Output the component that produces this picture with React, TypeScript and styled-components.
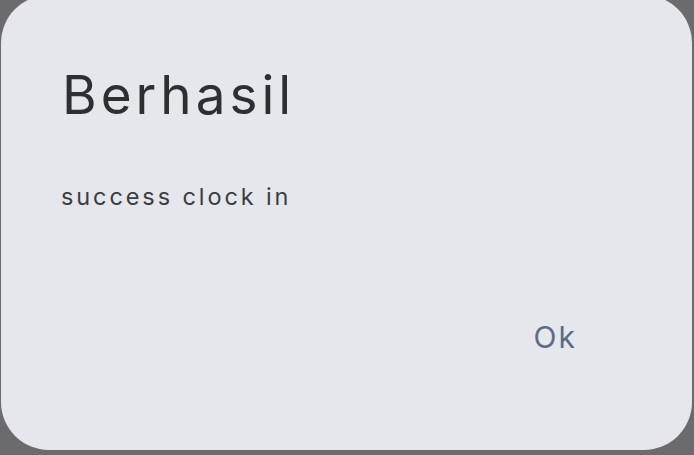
import styled, { createGlobalStyle } from "styled-components";

const Global = createGlobalStyle`
  html, body {
    margin: 0;
    padding: 0;
    background: #6b6b6d;
    overflow: hidden;
  }
  body {
    font-family: Inter, "Noto Sans", sans-serif;
  }
`;

const Backdrop = styled.div`
  width: 694px;
  height: 455px;
  padding: 0 2px 0 1px;
  box-sizing: border-box;
`;

const Dialog = styled.div`
  display: flex;
  flex-direction: column;
  margin-top: -5px;
  height: 455px;
  padding: 74px 60px 0 60px;
  box-sizing: border-box;

  background-color: #e6e7ec;
  border-radius: 48px;
`;

const Title = styled.div`
  padding-left: 1px;
  font-size: 53px;
  font-weight: 400;
  color: #2e2f33;
  line-height: 53px;
  letter-spacing: 4px;
`;

const Message = styled.div`
  margin-top: 60px;
  font-size: 23.5px;
  color: #3c3d41;
  letter-spacing: 2.9px;
`;

const Actions = styled.div`
  display: flex;
  justify-content: flex-end;
  margin-top: 108px;
  padding-right: 55px;
`;

const TextButton = styled.div`
  font-size: 30px;
  color: #5c6b86;
  letter-spacing: 2px;
  cursor: pointer;
`;

const App = () => {
  return (
    <Backdrop>
      <Global />
      <Dialog>
        <Title>Berhasil</Title>
        <Message>success clock in</Message>
        <Actions>
          <TextButton>Ok</TextButton>
        </Actions>
      </Dialog>
    </Backdrop>
  );
};

export default App;
